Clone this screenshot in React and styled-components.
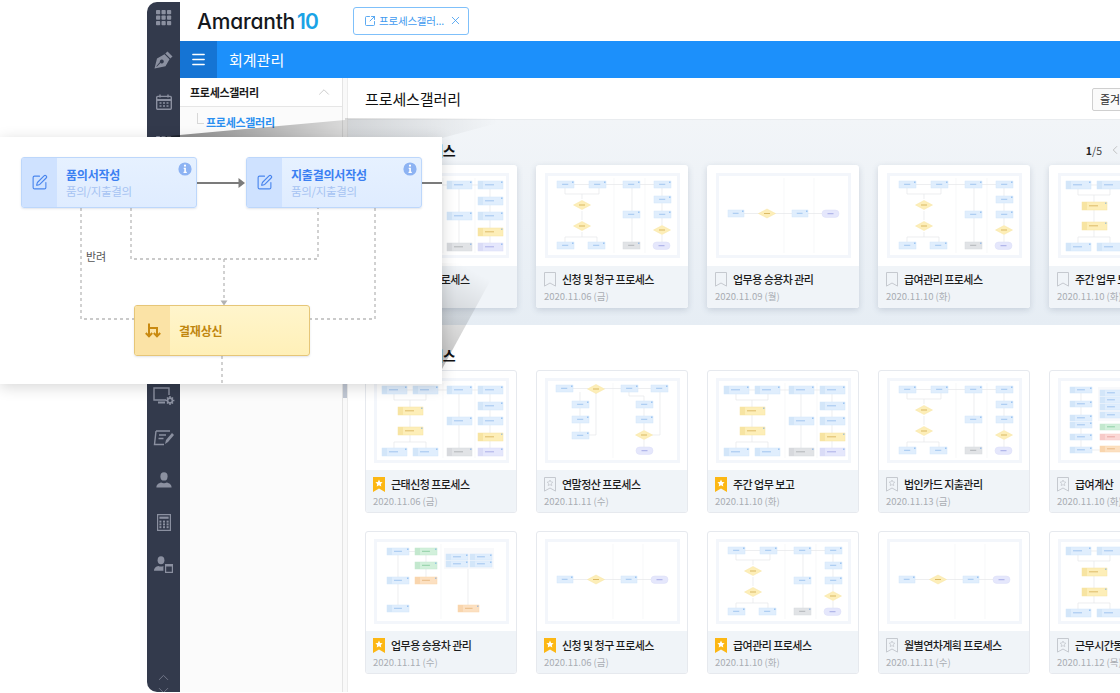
import React from 'react';
import styled, { createGlobalStyle } from 'styled-components';
import {
  ChevronDown,
  ChevronLeft,
  ChevronUp,
  Folder,
  Mail,
  Menu,
  SquareArrowOutUpRight,
  SquarePen,
  Users,
  X,
} from 'lucide-react';

const FONT = '"Noto Sans CJK KR", "Noto Sans", sans-serif';

const GlobalStyle = createGlobalStyle`
  html, body {
    margin: 0;
    padding: 0;
    background: #ffffff;
    font-family: ${FONT};
  }
`;

// mini diagrams, coords are inside the 135x85 thumbnail frame
const blue = (x, y, w = 17, h = 7) => ({ x, y, w, h, fill: '#e0eefd', stroke: '#d3e6f9', ink: '#6ea6e4' });
const yellow = (x, y, w = 25, h = 8) => ({ x, y, w, h, fill: '#fdeeb8', stroke: '#f7e4a2', ink: '#c4962c' });
const gray = (x, y, w = 17, h = 7) => ({ x, y, w, h, fill: '#e1e3e6', stroke: '#d7d9dd', ink: '#8d9096' });
const lav = (x, y, w = 25, h = 8) => ({ x, y, w, h, fill: '#e5e7fc', stroke: '#dadcf7', ink: '#7d83d8' });
const green = (x, y, w = 22, h = 7) => ({ x, y, w, h, fill: '#d2f0db', stroke: '#c3e8ce', ink: '#59b57a' });
const orange = (x, y, w = 22, h = 7) => ({ x, y, w, h, fill: '#fce0c1', stroke: '#f9d5ad', ink: '#d99a55' });
const red = (x, y, w = 22, h = 7) => ({ x, y, w, h, fill: '#fbd8d6', stroke: '#f7cac8', ink: '#d97f7a' });

const DIAGRAMS = {
  flow: {
    lanes: [69, 100],
    nodes: [
      blue(12, 8), blue(44, 8), blue(78, 8), blue(109, 8), blue(109, 23), blue(78, 38),
      blue(109, 38), blue(12, 69), blue(43, 69), gray(78, 69),
    ],
    pills: [[108, 69]],
    diamonds: [[37, 32], [37, 53], [117, 57]],
    lines: ['M29 11.5H44M61 11.5H78M95 11.5H109', 'M20 15V21H54V15M37 21V26M37 38V47M37 59V64H20V69M37 64H52V69', 'M87 15V38M87 45V69M117 15V38M117 45V52M117 62V69'],
  },
  simple: {
    lanes: [68, 98],
    nodes: [blue(12, 37, 16, 7), blue(76, 37, 16, 7)],
    pills: [[106, 37]],
    diamonds: [[51, 40.5]],
    lines: ['M28 40.5H43M59 40.5H76M92 40.5H106'],
  },
  wide: {
    lanes: [69, 101],
    nodes: [
      blue(8, 8, 25, 8), blue(39, 8, 25, 8), blue(73, 8, 25, 8), blue(104, 8, 25, 8),
      blue(104, 24, 25, 8), blue(73, 39, 25, 8), blue(104, 39, 25, 8), yellow(104, 55),
      lav(104, 70), yellow(24, 29), yellow(24, 49), blue(8, 70, 25, 8), blue(39, 70, 25, 8),
      gray(73, 70, 25, 8),
    ],
    pills: [],
    diamonds: [],
    lines: ['M33 12H39M64 12H73M98 12H104', 'M20 16V22H52V16M36 22V29M36 37V49M36 57V64H20V70M36 64H52V70', 'M85 16V39M85 47V70M116 16V24M116 32V39M116 47V55M116 63V70'],
  },
  branch: {
    lanes: [68],
    nodes: [
      blue(11, 7), blue(76, 7), blue(106, 7), blue(27, 23), blue(27, 38), blue(27, 54),
      blue(91, 23), blue(91, 38),
    ],
    pills: [[91, 69]],
    diamonds: [[51, 11], [99, 57]],
    lines: ['M28 10.5H43M59 10.5H76M93 10.5H106', 'M35 14V23M35 30V38M35 45V54M44 57H51V15', 'M84 14V18H99V23M99 30V38M99 45V52M99 62V69M115 14V57H107'],
  },
  groups: {
    lanes: [67],
    panels: [[70, 9, 50, 21]],
    nodes: [
      blue(13, 9, 22, 7), green(41, 9), green(41, 23), orange(41, 38), blue(13, 38, 22, 7),
      blue(13, 66, 22, 7), blue(72, 15, 22, 6), blue(96, 15, 22, 6), blue(72, 22, 22, 6),
      blue(96, 22, 22, 6), orange(84, 66, 21, 7),
    ],
    pills: [],
    diamonds: [],
    lines: ['M35 12.5H41M24 16V38M24 45V66M52 16V23M52 30V38M94 30V66'],
  },
  stack: {
    lanes: [],
    panels: [[40, 9, 60, 34]],
    nodes: [
      blue(12, 9, 22, 6), blue(12, 23, 22, 6), blue(12, 37, 22, 6), blue(12, 44, 22, 6),
      blue(12, 56, 22, 6), blue(12, 69, 22, 6), blue(42, 12, 22, 6), blue(42, 19, 22, 6),
      blue(42, 26, 22, 6), blue(42, 34, 22, 6), green(42, 46, 22, 6), red(42, 56, 22, 6),
      orange(42, 68, 22, 6),
    ],
    pills: [],
    diamonds: [],
    lines: ['M23 15V23M23 29V37M23 50V56M23 62V69M34 72H42'],
  },
};

const ROWS = {
  recent: [
    { title: '근태신청 프로세스', date: '2020.11.06 (금)', diagram: 'wide', mark: 'plain' },
    { title: '신청 및 청구 프로세스', date: '2020.11.06 (금)', diagram: 'flow', mark: 'plain' },
    { title: '업무용 승용차 관리', date: '2020.11.09 (월)', diagram: 'simple', mark: 'plain' },
    { title: '급여관리 프로세스', date: '2020.11.10 (화)', diagram: 'flow', mark: 'plain' },
    { title: '주간 업무 보고', date: '2020.11.10 (화)', diagram: 'wide', mark: 'plain' },
  ],
  all: [
    { title: '근태신청 프로세스', date: '2020.11.06 (금)', diagram: 'wide', mark: 'gold' },
    { title: '연말정산 프로세스', date: '2020.11.11 (수)', diagram: 'branch', mark: 'star' },
    { title: '주간 업무 보고', date: '2020.11.10 (화)', diagram: 'wide', mark: 'gold' },
    { title: '법인카드 지출관리', date: '2020.11.13 (금)', diagram: 'flow', mark: 'star' },
    { title: '급여계산', date: '2020.11.10 (화)', diagram: 'stack', mark: 'star' },
    { title: '업무용 승용차 관리', date: '2020.11.11 (수)', diagram: 'groups', mark: 'gold' },
    { title: '신청 및 청구 프로세스', date: '2020.11.06 (금)', diagram: 'simple', mark: 'gold' },
    { title: '급여관리 프로세스', date: '2020.11.10 (화)', diagram: 'flow', mark: 'gold' },
    { title: '월별연차계획 프로세스', date: '2020.11.11 (수)', diagram: 'simple', mark: 'star' },
    { title: '근무시간동의 프로세스', date: '2020.11.12 (목)', diagram: 'wide', mark: 'star' },
  ],
};

const GripIcon = () => (
  <svg width="16" height="16" viewBox="0 0 16 16" fill="#8b90a0">
    {[0, 5.5, 11].map((y) =>
      [0, 5.5, 11].map((x) => <rect key={`${x}-${y}`} x={x} y={y} width="4.2" height="4.2" rx="0.8" />)
    )}
  </svg>
);

const NibIcon = () => (
  <svg width="19" height="18" viewBox="0 0 19 18" fill="#8b90a0">
    <path d="M13.500 0.500l5 5-2.200 2-5-5z" />
    <path
      fillRule="evenodd"
      d="M0.500 17.500L3 7.500l7.500-4.200 5 5-4 7zM7.800 8.500a2 2 0 1 0 0.010 0zM2.800 15.800l3.600-3.900-0.700-0.700-3.300 4z"
    />
  </svg>
);

const CalendarIcon = () => (
  <svg width="16" height="16" viewBox="0 0 16 16" fill="none" stroke="#8b90a0" strokeWidth="1.4">
    <rect x="0.7" y="2.4" width="14.6" height="12.9" rx="1" />
    <path d="M0.7 6h14.6" strokeWidth="2.2" />
    <path d="M4 0.5v3M12 0.5v3" />
    <path d="M3.5 9h2M7 9h2M10.5 9h2M3.5 12h2M7 12h2M10.5 12h2" strokeWidth="1.6" />
  </svg>
);

const MonitorGearIcon = () => (
  <svg width="22" height="19" viewBox="0 0 22 19" fill="none" stroke="#8b90a0" strokeWidth="1.4">
    <path d="M13 13H1V1h15v7" />
    <path d="M5 15.5h7" strokeWidth="2" />
    <circle cx="17" cy="13.5" r="2.4" strokeWidth="1.6" />
    <path d="M17 9v2M17 16v2M12.6 13.5h2M19.4 13.5h2M14 10.5l1.3 1.3M18.7 15.2l1.3 1.3M14 16.5l1.3-1.3M18.7 11.8l1.3-1.3" strokeWidth="1.5" />
  </svg>
);

const SignIcon = () => (
  <svg width="22" height="16" viewBox="0 0 22 16" fill="none" stroke="#8b90a0" strokeWidth="1.4">
    <path d="M3 1h14M3 1L1.5 14.5H11" />
    <path d="M6 5h7M5.5 8.5h5" />
    <path d="M12 14l1-4 6-7 2 2-6 7z" fill="#8b90a0" stroke="none" />
  </svg>
);

const PersonIcon = () => (
  <svg width="16" height="16" viewBox="0 0 16 16" fill="#8b90a0">
    <ellipse cx="8" cy="4.4" rx="3.6" ry="4.2" />
    <path d="M0.4 15.6c0-3.4 2.2-4.4 4.8-5.2 1.8 1 3.8 1 5.6 0 2.6 0.8 4.8 1.8 4.8 5.2z" />
  </svg>
);

const CalculatorIcon = () => (
  <svg width="14" height="17" viewBox="0 0 14 17" fill="#8b90a0">
    <path d="M0 0h14v17H0zM1.2 1.2v14.6h11.6V1.2z" fillRule="evenodd" />
    <rect x="2.4" y="2.6" width="9.2" height="2.2" />
    {[6.6, 9.4, 12.2].map((y) =>
      [2.4, 6, 9.6].map((x) => <rect key={`${x}-${y}`} x={x} y={y} width="2" height="2" />)
    )}
  </svg>
);

const PersonDocIcon = () => (
  <svg width="19" height="17" viewBox="0 0 19 17" fill="#8b90a0">
    <ellipse cx="7" cy="4.2" rx="3.4" ry="4" />
    <path d="M0 14.8c0-3.2 2-4.2 4.4-4.9 1.6 0.9 3.4 0.9 5 0.2V14.8z" />
    <path d="M11 8h8v9h-8zM12.2 10.4v5.4h5.6v-5.4z" fillRule="evenodd" />
  </svg>
);

const Bookmark = ({ mark }) => {
  if (mark === 'gold') {
    return (
      <svg width="12" height="15" viewBox="0 0 12 15">
        <path d="M0 0h12v15l-6-3.4L0 15z" fill="#fcb714" />
        <path d="M6 2.6l1.1 2.3 2.5 0.3-1.8 1.7 0.5 2.5L6 8.2 3.7 9.4l0.5-2.5-1.8-1.7 2.5-0.3z" fill="#ffffff" />
      </svg>
    );
  }
  return (
    <svg width="12" height="15" viewBox="0 0 12 15" fill="none" stroke="#c5c9cf">
      <path d="M0.5 0.5h11v13.6L6 11 0.5 14.1z" />
      {mark === 'star' && <path d="M6 3l0.9 1.9 2 0.3-1.5 1.4 0.4 2L6 7.6 4.2 8.6l0.4-2-1.5-1.4 2-0.3z" strokeWidth="0.8" />}
    </svg>
  );
};

const Thumbnail = ({ name }) => {
  const d = DIAGRAMS[name];
  return (
    <svg width="135" height="85" viewBox="0 0 135 85">
      <rect x="1.5" y="1.5" width="132" height="82" fill="#ffffff" stroke="#f3f6fb" strokeWidth="3" />
      {d.lanes.map((x) => (
        <path key={x} d={`M${x} 5V80`} stroke="#f4f5f7" strokeWidth="0.7" />
      ))}
      {(d.panels || []).map(([x, y, w, h]) => (
        <rect key={x} x={x} y={y} width={w} height={h} fill="#f8f9fb" />
      ))}
      {d.lines.map((l) => (
        <path key={l} d={l} fill="none" stroke="#e5e7ea" strokeWidth="0.7" />
      ))}
      {d.nodes.map((n) => (
        <g key={`${n.x}-${n.y}`}>
          <rect x={n.x} y={n.y} width={n.w} height={n.h} fill={n.fill} stroke={n.stroke} strokeWidth="0.5" />
          {n.w >= 21 && <rect x={n.x} y={n.y} width="5" height={n.h} fill={n.stroke} />}
          <rect
            x={n.w >= 21 ? n.x + 7 : n.x + n.w * 0.3}
            y={n.y + n.h / 2 - 0.7}
            width={n.w * 0.36}
            height="1"
            fill={n.ink}
            opacity="0.55"
          />
          <rect x={n.x + n.w - 1.8} y={n.y + 0.6} width="1.2" height="1.2" fill="#5f9fe8" opacity="0.8" />
        </g>
      ))}
      {d.diamonds.map(([x, y]) => (
        <g key={`${x}-${y}`}>
          <path d={`M${x - 8.5} ${y}L${x} ${y - 4.5}L${x + 8.5} ${y}L${x} ${y + 4.5}Z`} fill="#fdeeb8" stroke="#f7e4a2" strokeWidth="0.5" />
          <rect x={x - 3} y={y - 0.5} width="6" height="1" fill="#c4962c" opacity="0.6" />
        </g>
      ))}
      {(d.pills || []).map(([x, y]) => (
        <g key={`${x}-${y}`}>
          <rect x={x} y={y} width="17" height="7.4" rx="3.7" fill="#e5e7fc" stroke="#dadcf7" strokeWidth="0.5" />
          <rect x={x + 5.5} y={y + 3.2} width="6" height="1" fill="#7d83d8" opacity="0.6" />
        </g>
      ))}
    </svg>
  );
};

const Connectors = () => (
  <DiagramLines width="442" height="247" viewBox="0 0 442 247" fill="none">
    <g stroke="#b9b9b9" strokeWidth="1.3" strokeDasharray="3 3">
      <path d="M81 71V182H134" />
      <path d="M131 71V122H318V71" />
      <path d="M224 122V164" />
      <path d="M375 71V182H310" />
      <path d="M222 219V247" />
    </g>
    <path d="M220.500 163.500h7l-3.500 5z" fill="#b2b2b2" />
    <path d="M197 46H240M422 46H442" stroke="#7b7b7b" strokeWidth="2.2" />
    <path d="M238.500 41l6.500 5-6.500 5z" fill="#7b7b7b" />
  </DiagramLines>
);

const InfoIcon = () => (
  <svg width="14" height="14" viewBox="0 0 14 14">
    <circle cx="7" cy="7" r="6.600" fill="#8db3f3" />
    <circle cx="7" cy="3.700" r="1.100" fill="#ffffff" />
    <path d="M5.700 5.800H7.900V9.800H8.800V11H5.500V9.800H6.300V7H5.700z" fill="#ffffff" />
  </svg>
);

const SplitIcon = () => (
  <svg width="16" height="15" viewBox="0 0 16 15" fill="none" stroke="#c98a10" strokeWidth="2">
    <path d="M4 0.500V13" />
    <path d="M0.800 10l3.200 3.400L7.200 10" />
    <path d="M4 5H12V13" />
    <path d="M8.800 10l3.200 3.400 3.200-3.400" />
  </svg>
);

const FlowNode = ({ tone, left, top, title, sub }) => (
  <NodeBox $tone={tone} $left={left} $top={top}>
    <NodeIcon $tone={tone}>
      {tone === 'blue' ? <SquarePen size={17} color="#4a86ee" strokeWidth={1.6} /> : <SplitIcon />}
    </NodeIcon>
    <NodeBody>
      <NodeTitle $tone={tone}>{title}</NodeTitle>
      {sub && <NodeSub>{sub}</NodeSub>}
    </NodeBody>
    {tone === 'blue' && (
      <NodeInfo>
        <InfoIcon />
      </NodeInfo>
    )}
  </NodeBox>
);

const GalleryCard = ({ item, flat }) => (
  <Card $flat={flat}>
    <CardImage>
      <Thumbnail name={item.diagram} />
    </CardImage>
    <CardFooter $flat={flat}>
      <CardTitleRow>
        <Bookmark mark={item.mark} />
        <CardTitle>{item.title}</CardTitle>
      </CardTitleRow>
      <CardDate>{item.date}</CardDate>
    </CardFooter>
  </Card>
);

export default function App() {
  return (
    <Page>
      <GlobalStyle />
      <Rail>
        <RailItem><GripIcon /></RailItem>
        <RailItem><NibIcon /></RailItem>
        <RailItem><CalendarIcon /></RailItem>
        <RailItem><GripIcon /></RailItem>
        <RailItem><Folder size={17} color="#8b90a0" /></RailItem>
        <RailItem><Mail size={17} color="#8b90a0" /></RailItem>
        <RailItem><Users size={17} color="#8b90a0" /></RailItem>
        <RailItem><Folder size={17} color="#8b90a0" /></RailItem>
        <RailItem><Mail size={17} color="#8b90a0" /></RailItem>
        <RailItem><MonitorGearIcon /></RailItem>
        <RailItem><SignIcon /></RailItem>
        <RailItem><PersonIcon /></RailItem>
        <RailItem><CalculatorIcon /></RailItem>
        <RailItem><PersonDocIcon /></RailItem>
        <RailArrows>
          <ChevronUp size={17} color="#7b8091" strokeWidth={1.2} />
          <ChevronDown size={17} color="#7b8091" strokeWidth={1.2} />
        </RailArrows>
      </Rail>

      <Main>
        <Header>
          <Logo>
            Amaranth<LogoNum>10</LogoNum>
          </Logo>
          <OpenTab>
            <SquareArrowOutUpRight size={12} strokeWidth={1.7} />
            <OpenTabText>프로세스갤러...</OpenTabText>
            <X size={13} strokeWidth={1.5} />
          </OpenTab>
        </Header>

        <BlueBar>
          <MenuButton>
            <Menu size={17} color="#ffffff" strokeWidth={2} />
          </MenuButton>
          <BarTitle>회계관리</BarTitle>
        </BlueBar>

        <Body>
          <Sidebar>
            <SideHead>
              <SideHeadText>프로세스갤러리</SideHeadText>
              <ChevronUp size={18} color="#c2c2c2" strokeWidth={1.1} />
            </SideHead>
            <SideItem>프로세스갤러리</SideItem>
          </Sidebar>
          <ScrollGutter>
            <ScrollThumb />
          </ScrollGutter>

          <Content>
            <TitleRow>
              <PageTitle>프로세스갤러리</PageTitle>
              <FavButton>즐겨찾기</FavButton>
            </TitleRow>

            <TintedSection>
              <SectionHead>
                <SectionTitle>최근본 프로세스</SectionTitle>
                <Pager>
                  <b>1</b>/5
                  <ChevronLeft size={14} color="#b5b5b5" strokeWidth={1.4} />
                </Pager>
              </SectionHead>
              <CardGrid>
                {ROWS.recent.map((item) => (
                  <GalleryCard key={item.title + item.date} item={item} />
                ))}
              </CardGrid>
            </TintedSection>

            <PlainSection>
              <SectionHead>
                <SectionTitle>등록된 프로세스</SectionTitle>
              </SectionHead>
              <CardGrid>
                {ROWS.all.map((item) => (
                  <GalleryCard key={item.title + item.date} item={item} flat />
                ))}
              </CardGrid>
            </PlainSection>
          </Content>
        </Body>
      </Main>

      <ConeTop width="400" height="20" viewBox="0 0 400 20">
        <defs>
          <linearGradient id="coneTop" gradientUnits="userSpaceOnUse" x1="40" y1="22" x2="350" y2="-6">
            <stop offset="0" stopColor="#000000" stopOpacity="0.42" />
            <stop offset="0.5" stopColor="#000000" stopOpacity="0.14" />
            <stop offset="1" stopColor="#000000" stopOpacity="0" />
          </linearGradient>
        </defs>
        <path d="M0 20L198 2V0H370L295 20z" fill="url(#coneTop)" />
      </ConeTop>
      <ConeBottom width="60" height="106" viewBox="0 0 60 106">
        <defs>
          <linearGradient id="coneBottom" x1="0" y1="1" x2="0.3" y2="0">
            <stop offset="0" stopColor="#000000" stopOpacity="0.26" />
            <stop offset="1" stopColor="#000000" stopOpacity="0" />
          </linearGradient>
        </defs>
        <path d="M0 106L58 0H0z" fill="url(#coneBottom)" />
      </ConeBottom>

      <Popup>
        <Connectors />
        <FlowNode tone="blue" left={21} top={20} title="품의서작성" sub="품의/지출결의" />
        <FlowNode tone="blue" left={246} top={20} title="지출결의서작성" sub="품의/지출결의" />
        <FlowNode tone="gold" left={134} top={168} title="결재상신" />
        <ReturnLabel>반려</ReturnLabel>
      </Popup>
    </Page>
  );
}

const Page = styled.div`
  position: relative;
  width: 1120px;
  height: 693px;
  overflow: hidden;
  box-sizing: border-box;
  display: flex;
  padding: 2px 0 1px 147px;
  background: #ffffff;
`;

const Rail = styled.nav`
  flex: 0 0 33px;
  position: relative;
  overflow: hidden;
  display: flex;
  flex-direction: column;
  background: #333a4c;
  border-radius: 10px 0 0 10px;
`;

const RailItem = styled.div`
  flex: 0 0 42px;
  height: 42px;
  display: flex;
  align-items: center;
  justify-content: center;
  position: relative;
  top: -5px;
`;

const RailArrows = styled.div`
  position: absolute;
  left: 0;
  right: 0;
  bottom: -7px;
  display: flex;
  flex-direction: column;
  align-items: center;

  svg + svg {
    margin-top: -4px;
  }
`;

const Main = styled.div`
  flex: 1;
  min-width: 0;
  display: flex;
  flex-direction: column;
`;

const Header = styled.header`
  height: 39px;
  flex: none;
  display: flex;
  align-items: center;
  padding-left: 17px;
  background: #ffffff;
`;

const Logo = styled.div`
  width: 156px;
  display: flex;
  align-items: center;
  font-family: Inter, sans-serif;
  font-feature-settings: 'cv11';
  font-size: 21px;
  font-weight: 500;
  letter-spacing: -0.2px;
  color: #15181d;
`;

const LogoNum = styled.span`
  margin-left: 2px;
  font-weight: 600;
  color: #1aa3e6;
  letter-spacing: -1px;
`;

const OpenTab = styled.div`
  width: 116px;
  height: 28px;
  box-sizing: border-box;
  margin-top: -2px;
  display: flex;
  align-items: center;
  gap: 3px;
  padding: 0 6px 0 10px;
  border: 1px solid #7fc0fa;
  border-radius: 3px;
  color: #3f9bf0;
`;

const OpenTabText = styled.span`
  flex: 1;
  font-size: 10.5px;
  letter-spacing: -0.2px;
  white-space: nowrap;
`;

const BlueBar = styled.div`
  height: 37px;
  flex: none;
  display: flex;
  align-items: center;
  background: #1c90fb;
`;

const MenuButton = styled.div`
  width: 37px;
  height: 37px;
  display: flex;
  align-items: center;
  justify-content: center;
  background: #1574d4;
`;

const BarTitle = styled.div`
  margin-left: 12px;
  font-size: 15px;
  color: #ffffff;
`;

const Body = styled.div`
  flex: 1;
  min-height: 0;
  display: flex;
`;

const Sidebar = styled.aside`
  flex: 0 0 163px;
  box-sizing: border-box;
  background: #fbfbfb;
  border-right: 1px solid #e4e4e4;
`;

const SideHead = styled.div`
  height: 29px;
  box-sizing: border-box;
  display: flex;
  align-items: center;
  justify-content: space-between;
  padding: 0 9px 0 10px;
  background: #ffffff;
  border-bottom: 1px solid #e6e6e6;
`;

const SideHeadText = styled.span`
  font-size: 11px;
  font-weight: 700;
  letter-spacing: -0.3px;
  color: #1a1a1a;
`;

const SideItem = styled.div`
  position: relative;
  margin: 7px 0 0 26px;
  font-size: 11px;
  font-weight: 700;
  letter-spacing: -0.3px;
  color: #2a8ff0;

  &::before {
    content: '';
    position: absolute;
    left: -9px;
    top: -1px;
    width: 6px;
    height: 10px;
    border-left: 1px solid #d8d8d8;
    border-bottom: 1px solid #d8d8d8;
  }
`;

const ScrollGutter = styled.div`
  flex: 0 0 5px;
  background: #f9f9f9;
  border-right: 1px solid #ececec;
  box-sizing: border-box;
`;

const ScrollThumb = styled.div`
  width: 4px;
  height: 14px;
  margin-top: 306px;
  background: #bfc6d2;
`;

const Content = styled.main`
  flex: 1;
  min-width: 0;
  overflow: hidden;
`;

const TitleRow = styled.div`
  height: 41px;
  box-sizing: border-box;
  display: flex;
  align-items: center;
  justify-content: space-between;
  padding-left: 17px;
  margin-right: -20px;
`;

const PageTitle = styled.h1`
  margin: 0;
  font-size: 15px;
  font-weight: 400;
  letter-spacing: -0.1px;
  color: #111111;
`;

const FavButton = styled.div`
  width: 48px;
  height: 23px;
  box-sizing: border-box;
  margin-top: 1px;
  padding-left: 7px;
  line-height: 21px;
  font-size: 11px;
  white-space: nowrap;
  color: #2a2a2a;
  background: #fafafa;
  border: 1px solid #cfcfcf;
  border-radius: 2px;
`;

const TintedSection = styled.section`
  height: 206px;
  box-sizing: border-box;
  padding: 22px 0 0 17px;
  background: linear-gradient(#f2f5f8, #e6edf4);
  border-top: 1px solid #e9ecef;
`;

const PlainSection = styled.section`
  padding: 22px 0 0 17px;
`;

const SectionHead = styled.div`
  height: 16px;
  width: 757px;
  margin-bottom: 7px;
  display: flex;
  align-items: center;
  justify-content: space-between;
`;

const SectionTitle = styled.h2`
  margin: 0;
  font-size: 14px;
  font-weight: 700;
  line-height: 16px;
  letter-spacing: -0.4px;
  color: #111111;
`;

const Pager = styled.div`
  display: flex;
  align-items: center;
  gap: 6px;
  font-size: 10.5px;
  color: #444444;

  b {
    margin-right: -6px;
    color: #222222;
  }
`;

const CardGrid = styled.div`
  display: grid;
  grid-template-columns: repeat(5, 152px);
  gap: 18px 19px;
`;

const Card = styled.article`
  height: 143px;
  box-sizing: border-box;
  display: flex;
  flex-direction: column;
  background: #ffffff;
  border-radius: 3px;
  overflow: hidden;
  border: ${(p) => (p.$flat ? '1px solid #e6e9ee' : 'none')};
  box-shadow: ${(p) => (p.$flat ? 'none' : '0 2px 6px rgba(70, 90, 120, 0.2)')};
`;

const CardImage = styled.div`
  flex: 1;
  min-height: 0;
  display: flex;
  align-items: center;
  justify-content: center;

  svg {
    display: block;
  }
`;

const CardFooter = styled.div`
  flex: 0 0 42px;
  box-sizing: border-box;
  padding: ${(p) => (p.$flat ? '7px 0 0 7px' : '6px 0 0 8px')};
  background: #f0f4f8;
`;

const CardTitleRow = styled.div`
  height: 15px;
  display: flex;
  align-items: center;
  gap: 6px;
`;

const CardTitle = styled.span`
  font-size: 11px;
  font-weight: 500;
  line-height: 15px;
  letter-spacing: -0.55px;
  white-space: nowrap;
  color: #1c1c1c;
`;

const CardDate = styled.div`
  margin-top: 2px;
  font-size: 9.5px;
  line-height: 14px;
  white-space: nowrap;
  color: #a9adb3;
`;

const ConeTop = styled.svg`
  position: absolute;
  left: 147px;
  top: 118px;
`;

const ConeBottom = styled.svg`
  position: absolute;
  left: 442px;
  top: 263px;
`;

const Popup = styled.div`
  position: absolute;
  left: 0;
  top: 137px;
  width: 442px;
  height: 247px;
  background: #ffffff;
  box-shadow: 0 3px 14px rgba(0, 0, 0, 0.16);
`;

const DiagramLines = styled.svg`
  position: absolute;
  left: 0;
  top: 0;
`;

const NodeBox = styled.div`
  position: absolute;
  left: ${(p) => p.$left}px;
  top: ${(p) => p.$top}px;
  width: 176px;
  height: 51px;
  box-sizing: border-box;
  display: flex;
  overflow: hidden;
  border-radius: 3px;
  border: 1px solid ${(p) => (p.$tone === 'blue' ? '#bdd7fb' : '#e6c678')};
  background: ${(p) =>
    p.$tone === 'blue'
      ? 'linear-gradient(#e6f1ff, #dfecff)'
      : 'linear-gradient(#fff5cc, #fff0b8)'};
  box-shadow: 0 1px 2px rgba(60, 80, 120, 0.15);
`;

const NodeIcon = styled.div`
  flex: 0 0 35px;
  display: flex;
  align-items: center;
  justify-content: center;
  background: ${(p) => (p.$tone === 'blue' ? '#cfe2ff' : '#fbe3a6')};
`;

const NodeBody = styled.div`
  flex: 1;
  padding-left: 9px;
  display: flex;
  flex-direction: column;
  justify-content: center;
`;

const NodeTitle = styled.div`
  font-size: 12px;
  line-height: 16px;
  font-weight: 700;
  letter-spacing: -0.2px;
  color: ${(p) => (p.$tone === 'blue' ? '#3b80f2' : '#bf860f')};
`;

const NodeSub = styled.div`
  font-size: 11.500px;
  line-height: 16px;
  letter-spacing: -0.3px;
  color: #a6c3f2;
`;

const NodeInfo = styled.div`
  position: absolute;
  top: 4px;
  right: 4px;
  line-height: 0;
`;

const ReturnLabel = styled.span`
  position: absolute;
  left: 86px;
  top: 111px;
  font-size: 11px;
  line-height: 16px;
  color: #555555;
`;
